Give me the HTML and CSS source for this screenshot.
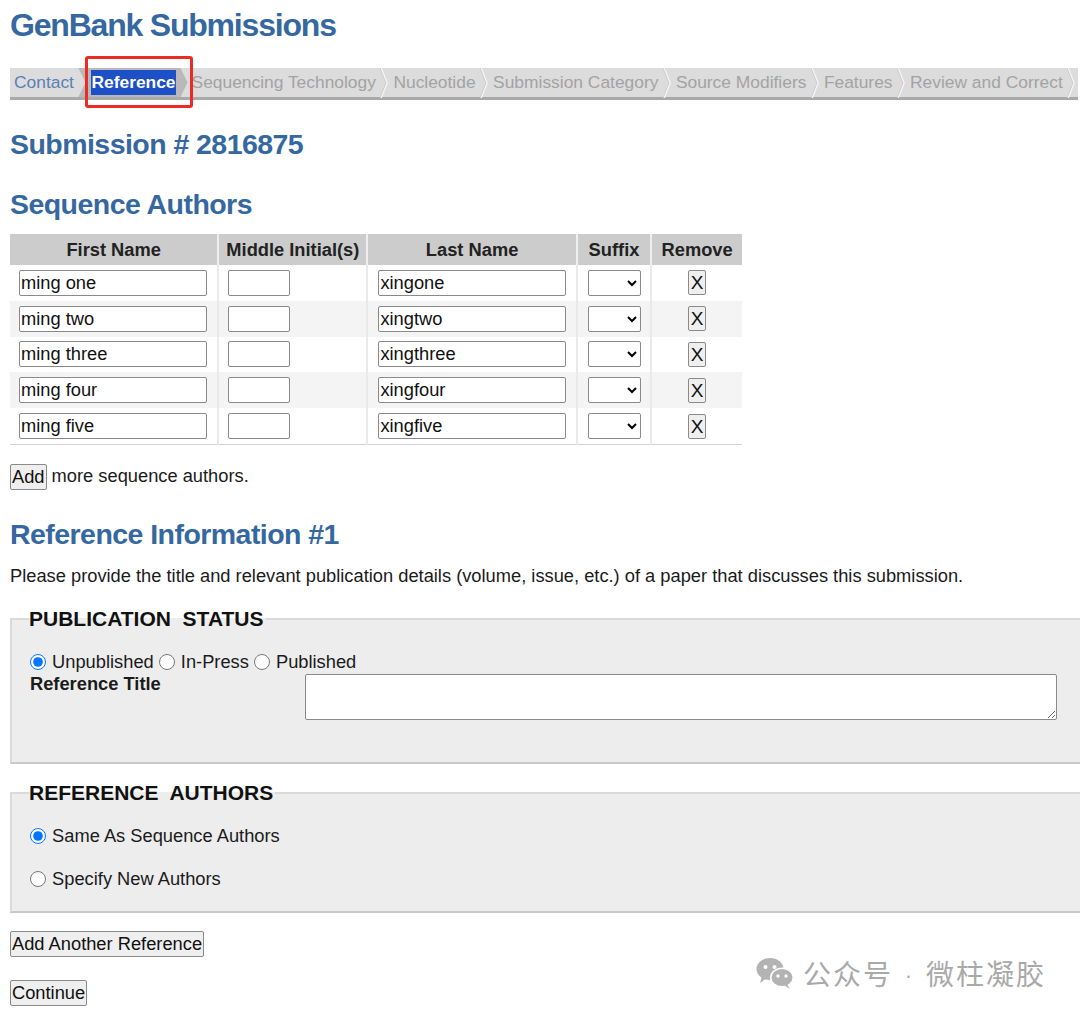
FILE: index.html
```html
<!DOCTYPE html>
<html lang="en">
<head>
<meta charset="utf-8">
<title>GenBank Submissions</title>
<link rel="stylesheet" href="styles.css">
</head>
<body>
<h1 class="title">GenBank Submissions</h1>

<nav class="steps">
  <span class="step link">Contact</span>
  <span class="step active"><span class="sel">Reference</span></span>
  <span class="step">Sequencing Technology</span><span class="sep"><svg viewBox="0 0 9 30" width="9" height="30"><polyline points="1,0 7,15 1,30" fill="none" stroke="#f6f6f6" stroke-width="1.6"/><polyline points="0,0 6,15 0,30" fill="none" stroke="#c8c8c8" stroke-width="0.8"/></svg></span>
  <span class="step">Nucleotide</span><span class="sep"><svg viewBox="0 0 9 30" width="9" height="30"><polyline points="1,0 7,15 1,30" fill="none" stroke="#f6f6f6" stroke-width="1.6"/><polyline points="0,0 6,15 0,30" fill="none" stroke="#c8c8c8" stroke-width="0.8"/></svg></span>
  <span class="step">Submission Category</span><span class="sep"><svg viewBox="0 0 9 30" width="9" height="30"><polyline points="1,0 7,15 1,30" fill="none" stroke="#f6f6f6" stroke-width="1.6"/><polyline points="0,0 6,15 0,30" fill="none" stroke="#c8c8c8" stroke-width="0.8"/></svg></span>
  <span class="step">Source Modifiers</span><span class="sep"><svg viewBox="0 0 9 30" width="9" height="30"><polyline points="1,0 7,15 1,30" fill="none" stroke="#f6f6f6" stroke-width="1.6"/><polyline points="0,0 6,15 0,30" fill="none" stroke="#c8c8c8" stroke-width="0.8"/></svg></span>
  <span class="step">Features</span><span class="sep"><svg viewBox="0 0 9 30" width="9" height="30"><polyline points="1,0 7,15 1,30" fill="none" stroke="#f6f6f6" stroke-width="1.6"/><polyline points="0,0 6,15 0,30" fill="none" stroke="#c8c8c8" stroke-width="0.8"/></svg></span>
  <span class="step">Review and Correct</span><span class="sep"><svg viewBox="0 0 9 30" width="9" height="30"><polyline points="1,0 7,15 1,30" fill="none" stroke="#f6f6f6" stroke-width="1.6"/><polyline points="0,0 6,15 0,30" fill="none" stroke="#c8c8c8" stroke-width="0.8"/></svg></span>
  <span class="mark"></span>
</nav>

<h2 class="subno">Submission # 2816875</h2>

<h2 class="section">Sequence Authors</h2>
<table class="authors">
  <thead>
    <tr><th class="c-first">First Name</th><th class="c-mid">Middle Initial(s)</th><th class="c-last">Last Name</th><th class="c-suf">Suffix</th><th class="c-rm">Remove</th></tr>
  </thead>
  <tbody>
    <tr><td><input class="name" type="text" value="ming one"></td><td><input class="mid" type="text"></td><td class="pl"><input class="name" type="text" value="xingone"></td><td class="pl"><select class="suffix"><option></option><option>Jr.</option><option>Sr.</option></select></td><td class="ctr"><button class="x">X</button></td></tr>
    <tr><td><input class="name" type="text" value="ming two"></td><td><input class="mid" type="text"></td><td class="pl"><input class="name" type="text" value="xingtwo"></td><td class="pl"><select class="suffix"><option></option><option>Jr.</option><option>Sr.</option></select></td><td class="ctr"><button class="x">X</button></td></tr>
    <tr><td><input class="name" type="text" value="ming three"></td><td><input class="mid" type="text"></td><td class="pl"><input class="name" type="text" value="xingthree"></td><td class="pl"><select class="suffix"><option></option><option>Jr.</option><option>Sr.</option></select></td><td class="ctr"><button class="x">X</button></td></tr>
    <tr><td><input class="name" type="text" value="ming four"></td><td><input class="mid" type="text"></td><td class="pl"><input class="name" type="text" value="xingfour"></td><td class="pl"><select class="suffix"><option></option><option>Jr.</option><option>Sr.</option></select></td><td class="ctr"><button class="x">X</button></td></tr>
    <tr><td><input class="name" type="text" value="ming five"></td><td><input class="mid" type="text"></td><td class="pl"><input class="name" type="text" value="xingfive"></td><td class="pl"><select class="suffix"><option></option><option>Jr.</option><option>Sr.</option></select></td><td class="ctr"><button class="x">X</button></td></tr>
  </tbody>
</table>

<p class="addrow"><button class="btn">Add</button> more sequence authors.</p>

<h2 class="section refinfo">Reference Information #1</h2>
<p class="intro">Please provide the title and relevant publication details (volume, issue, etc.) of a paper that discusses this submission.</p>

<fieldset class="box pub">
  <legend>PUBLICATION&nbsp; STATUS</legend>
  <div class="radios">
    <label><input type="radio" name="status" checked> Unpublished</label>
    <label><input type="radio" name="status"> In-Press</label>
    <label><input type="radio" name="status"> Published</label>
  </div>
  <div class="titlerow">
    <span class="lbl">Reference Title</span>
    <textarea class="reftitle"></textarea>
  </div>
</fieldset>

<fieldset class="box refauth">
  <legend>REFERENCE&nbsp; AUTHORS</legend>
  <label class="opt"><input type="radio" name="ra" checked> Same As Sequence Authors</label>
  <label class="opt"><input type="radio" name="ra"> Specify New Authors</label>
</fieldset>

<p class="act"><button class="btn">Add Another Reference</button></p>
<p class="act"><button class="btn">Continue</button></p>

<div class="watermark">
  <svg class="wx" viewBox="0 0 40 32" width="40" height="32">
    <ellipse cx="15" cy="12" rx="13.5" ry="11" fill="#b3b3b3"/>
    <polygon points="7,19 5,26 12,21" fill="#b3b3b3"/>
    <circle cx="10.5" cy="10" r="2" fill="#fff"/>
    <circle cx="19.5" cy="10" r="2" fill="#fff"/>
    <ellipse cx="27" cy="20.5" rx="12" ry="10" fill="#fff"/>
    <ellipse cx="27" cy="20.5" rx="10.5" ry="8.6" fill="#b3b3b3"/>
    <polygon points="32,27 35,32 29,28" fill="#b3b3b3"/>
    <circle cx="23" cy="19" r="1.7" fill="#fff"/>
    <circle cx="31" cy="19" r="1.7" fill="#fff"/>
  </svg>
  <span>公众号<span class="dot">·</span>微柱凝胶</span>
</div>
</body>
</html>
```

FILE: styles.css
```css
html, body {
  margin: 0;
  padding: 0;
}
body {
  padding: 0 0 0 10px;
  font-family: "Liberation Sans", Arial, sans-serif;
  font-size: 18.3px;
  color: #1b1b1b;
  background: #fff;
  overflow: hidden;
  width: 1070px;
  height: 1015px;
  position: relative;
}

.title {
  font-size: 32px;
  letter-spacing: -1.2px;
  font-weight: bold;
  color: #3568a0;
  margin: 0;
  padding-top: 6px;
  line-height: 38px;
}

/* step navigation */
.steps {
  position: relative;
  display: flex;
  align-items: center;
  height: 29px;
  margin: 24px 2px 0 0;
  background: #dcdcdc;
  border-bottom: 3px solid #a9a9a9;
  font-size: 17.4px;
  color: #a3a3a3;
}
.step {
  padding: 0 4.5px 0 4px;
  white-space: nowrap;
  line-height: 29px;
}
.step.link {
  color: #5a80b5;
}
.sep {
  display: flex;
  width: 9px;
  height: 29px;
}
.sep svg {
  display: block;
}
.step.active {
  background: #b9b9b9;
  padding: 0 12px 0 13px;
  clip-path: polygon(0 0, calc(100% - 7px) 0, 100% 50%, calc(100% - 7px) 100%, 0 100%, 7px 50%);
  font-weight: bold;
  color: #fff;
}
.sel {
  background: #1d4fc6;
  padding: 2px 0 3px;
}
.mark {
  position: absolute;
  left: 75px;
  top: -12px;
  width: 102px;
  height: 46px;
  border: 3px solid #ee2a24;
  border-radius: 3px;
}

.subno {
  margin: 27px 0 0 0;
  font-size: 28.5px;
  letter-spacing: -0.55px;
  line-height: 34px;
  color: #3568a0;
}
.section {
  margin: 26px 0 0 0;
  font-size: 28.5px;
  letter-spacing: -0.55px;
  line-height: 34px;
  color: #3568a0;
}

/* authors table */
.authors {
  border-collapse: collapse;
  margin-top: 13px;
  width: 732px;
  border-bottom: 1px solid #d2d2d2;
}
.authors th {
  background: #cccccc;
  height: 31px;
  padding: 0;
  font-size: 18.3px;
  font-weight: bold;
  color: #222;
  border-right: 2px solid #efefef;
  text-align: center;
}
.authors th:last-child { border-right: 0; }
.c-first { width: 208px; }
.c-mid { width: 152px; }
.c-last { width: 208px; }
.c-suf { width: 73px; }
.c-rm { width: 91px; }
.authors td {
  height: 35.8px;
  padding: 0 0 0 9px;
  border-right: 2px solid #eaeaea;
  vertical-align: middle;
}
.authors td.pl { padding-left: 10px; }
.authors td.ctr { padding: 0; text-align: center; border-right: 0; }
.authors tbody tr:nth-child(even) td { background: #f4f4f4; }

input.name, input.mid {
  box-sizing: border-box;
  height: 26px;
  border: 1px solid #8a8a8a;
  border-radius: 2px;
  padding: 0 1px;
  font-family: "Liberation Sans", Arial, sans-serif;
  font-size: 18.3px;
  color: #111;
  display: block;
}
input.name { width: 188px; }
input.mid { width: 62px; }
select.suffix {
  box-sizing: border-box;
  width: 53px;
  height: 26px;
  display: block;
  font-size: 15px;
  border: 1px solid #8a8a8a;
  border-radius: 2px;
  background: #fff;
}
button.x {
  width: 18px;
  height: 25px;
  padding: 0;
  font-family: "Liberation Sans", Arial, sans-serif;
  font-size: 19px;
  line-height: 23px;
  border: 1px solid #8a8a8a;
  border-radius: 2px;
  background: #efefef;
  color: #111;
}

.btn {
  box-sizing: border-box;
  font-family: "Liberation Sans", Arial, sans-serif;
  font-size: 18.3px;
  color: #111;
  padding: 0 1px;
  height: 26px;
  line-height: 22px;
  border: 1px solid #8a8a8a;
  border-radius: 2px;
  background: #efefef;
  vertical-align: middle;
}
.addrow {
  margin: 18px 0 0 0;
  line-height: 26px;
  height: 26px;
}

.refinfo { margin-top: 28px; }
.intro {
  margin: 15px 0 0 0;
  line-height: 20px;
}

/* fieldsets */
.box {
  box-sizing: border-box;
  width: 1090px;
  margin: 21px 0 0 0;
  padding: 0 0 0 18px;
  background: #ededed;
  border: 2px solid #dadada;
  border-bottom-color: #c9c9c9;
  border-right: 0;
}
.box legend {
  font-size: 21px;
  font-weight: bold;
  color: #111;
  padding: 0 2px 0 0;
  margin-left: -1px;
  line-height: 24px;
}
.box input[type="radio"] {
  width: 16px;
  height: 16px;
  margin: 0 1px 0 0;
  vertical-align: -2px;
}
.pub {
  padding-bottom: 42px;
}
.radios {
  margin-top: 21px;
  line-height: 20px;
  display: flex;
  gap: 5px;
}
.titlerow {
  display: flex;
  align-items: flex-start;
  margin-top: 1px;
}
.lbl {
  font-weight: bold;
  width: 275px;
  line-height: 22px;
}
.reftitle {
  box-sizing: border-box;
  width: 752px;
  height: 46px;
  border: 1px solid #8a8a8a;
  border-radius: 2px;
  background: #fff;
  margin: 1px 0 0 0;
  display: block;
}

.refauth {
  margin-top: 17px;
  padding-bottom: 22px;
}
.opt {
  display: block;
  line-height: 20px;
}
.opt:first-of-type { margin-top: 21px; }
.opt + .opt { margin-top: 23px; }

.act {
  margin: 17px 0 0 0;
  line-height: 26px;
  height: 26px;
}
.act + .act { margin-top: 23px; }

.watermark {
  position: absolute;
  left: 755px;
  top: 953px;
  display: flex;
  align-items: center;
  gap: 8px;
  color: #a9a9a9;
  font-family: "Noto Sans CJK SC", sans-serif;
  font-size: 28px;
  letter-spacing: 2px;
}
.dot {
  display: inline-block;
  width: 33px;
  text-align: center;
  font-family: "Liberation Sans", sans-serif;
  font-size: 22px;
  vertical-align: 2px;
}
.wx { display: block; }
```
